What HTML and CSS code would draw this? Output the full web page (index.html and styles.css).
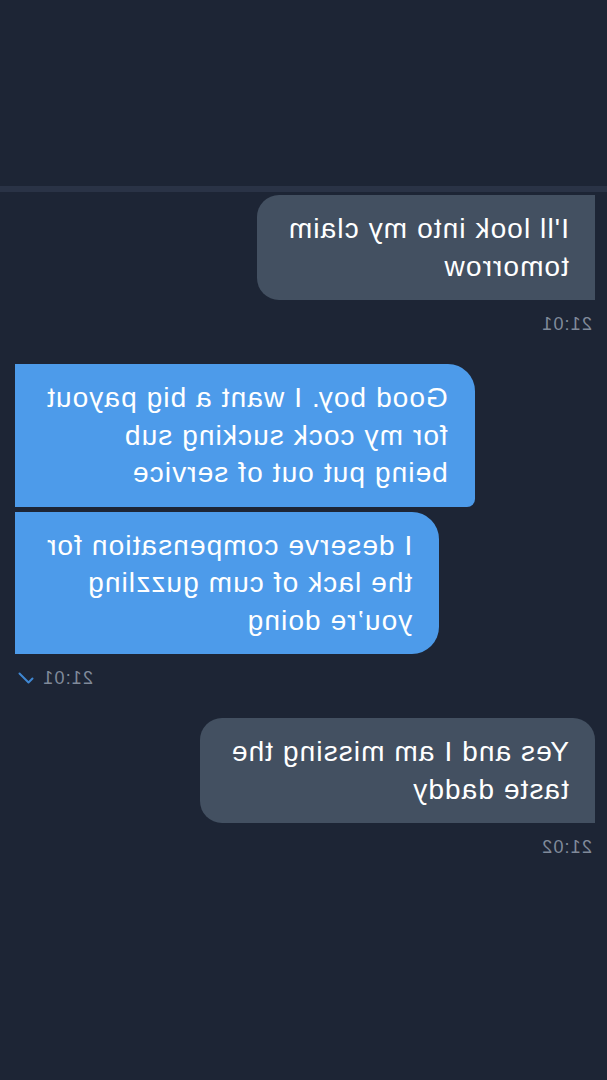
FILE: index.html
```html
<!DOCTYPE html>
<html>
  <head>
    <title>Chat</title>
    <link rel="stylesheet" href="styles.css">
  </head>
  <body>
    <div class="screen">
      <div class="header"></div>
      <div class="divider"></div>

      <div class="chat">
        <div class="group incoming">
          <div class="bubble gray first">I'll look into my claim<br>tomorrow</div>
          <div class="meta">21:01</div>
        </div>

        <div class="group outgoing">
          <div class="bubble blue">Good boy. I want a big payout<br>for my cock sucking sub<br>being put out of service</div>
          <div class="bubble blue last">I deserve compensation for<br>the lack of cum guzzling<br>you’re doing</div>
          <div class="meta">
            21:01
            <svg class="check" width="16" height="12" viewBox="0 0 16 12">
              <path d="M1.5 6.5 L5.5 10.5 L14.5 1.5" fill="none" stroke="#3f87d2" stroke-width="2" stroke-linecap="round" stroke-linejoin="round"/>
            </svg>
          </div>
        </div>

        <div class="group incoming">
          <div class="bubble gray">Yes and I am missing the<br>taste daddy</div>
          <div class="meta">21:02</div>
        </div>
      </div>
    </div>
  </body>
</html>
```

FILE: styles.css
```css
html,
body {
  margin: 0;
  background: #1d2535;
}

body {
  font-family: "Liberation Sans", Arial, sans-serif;
  color: #fff;
}

/* the capture is a mirror image, so the whole screen is flipped */
.screen {
  width: 607px;
  height: 1080px;
  transform: scaleX(-1);
}

.header {
  height: 186px;
}

.divider {
  height: 6px;
  background: #2a3346;
}

.chat {
  display: flex;
  flex-direction: column;
  padding-top: 3px;
}

.group {
  display: flex;
  flex-direction: column;
  gap: 5px;
  margin-bottom: 30px;
}

.incoming {
  align-items: flex-start;
  padding-left: 12px;
}

.outgoing {
  align-items: flex-end;
  padding-right: 15px;
}

.bubble {
  font-size: 28px;
  line-height: 37.5px;
  letter-spacing: 1.1px;
  padding: 15px 31px 15px 26px;
}

.gray {
  background: #435061;
  border-radius: 0 22px 22px 0;
}

.incoming .gray:not(.first) {
  border-radius: 22px 22px 22px 0;
}

.blue {
  background: #4d9bea;
  padding-left: 27px;
  border-radius: 27px 0 0 8px;
}

.blue.last {
  border-radius: 27px 0 0 27px;
}

.meta {
  display: flex;
  align-items: center;
  gap: 8px;
  margin-top: 9px;
  font-size: 18px;
  line-height: 20px;
  color: #808a9a;
  letter-spacing: 1.2px;
}

.incoming .meta {
  padding-left: 3px;
}

.outgoing .meta {
  padding-right: 3px;
}

.check {
  display: block;
}
```
